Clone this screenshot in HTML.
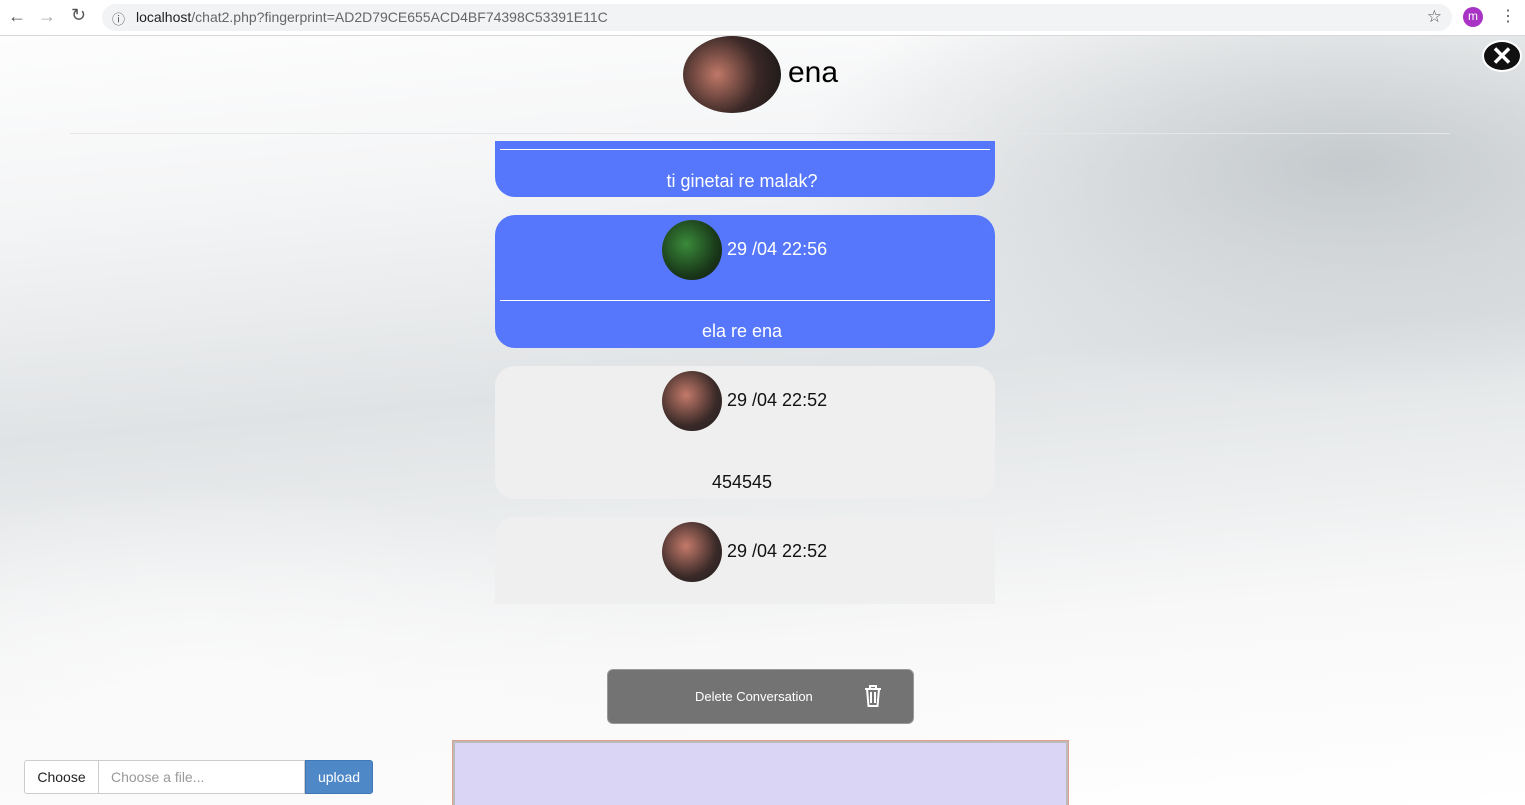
<!DOCTYPE html>
<html><head><style>
*{box-sizing:border-box;margin:0;padding:0}
html,body{width:1525px;height:805px;overflow:hidden}
body{font-family:"Liberation Sans",sans-serif;position:relative;background:#fff}
.bar{position:absolute;left:0;top:0;width:1525px;height:36px;background:#fff;border-bottom:1px solid #d8d8d8}
.url{position:absolute;left:102px;top:4px;width:1350px;height:27px;background:#f1f3f4;border-radius:14px}
.bg{position:absolute;left:0;top:36px;width:1525px;height:769px;background:linear-gradient(175deg,#fdfdfd 0%,#f4f5f6 20%,#e0e3e5 45%,#eceeef 62%,#f8f8f8 75%,#fff 100%)}
.bg2{position:absolute;left:0;top:36px;width:1525px;height:769px;background:radial-gradient(ellipse 550px 230px at 1350px 130px,#c5cacd,transparent),radial-gradient(ellipse 500px 200px at 200px 650px,#fafafa,transparent)}
.msg{position:absolute;left:495px;width:500px;border-radius:20px;text-align:center;font-size:18px;padding-right:6px}
.blue{background:#5677fb;color:#fff}
.grey{background:#efefef;color:#111}
.av{position:absolute;left:167px;width:60px;height:60px;border-radius:50%;background:radial-gradient(circle at 40% 40%,#c47a6a,#3a2a28 60%,#1b1b1b)}
.t{position:absolute;left:232px}
.line{position:absolute;left:5px;right:5px;height:1px;background:#fff}
</style></head><body>
<div class="bar">
<span style="position:absolute;left:8px;top:6px;font-size:18px;color:#555">←</span>
<span style="position:absolute;left:38px;top:6px;font-size:18px;color:#aaa">→</span>
<span style="position:absolute;left:71px;top:5px;font-size:18px;color:#555">↻</span>
<div class="url"><span style="position:absolute;left:10px;top:5px;font-size:13px;color:#555">ⓘ</span><span style="position:absolute;left:34px;top:5px;font-size:14px;color:#222">localhost<span style="color:#666">/chat2.php?fingerprint=AD2D79CE655ACD4BF74398C53391E11C</span></span>
<span style="position:absolute;right:10px;top:3px;font-size:17px;color:#555">☆</span></div>
<div style="position:absolute;left:1463px;top:7px;width:20px;height:20px;border-radius:50%;background:#a833c4;color:#fff;font-size:12px;text-align:center;line-height:19px">m</div>
<span style="position:absolute;left:1500px;top:6px;font-size:16px;color:#555">⋮</span>
</div>
<div class="bg"></div><div class="bg2"></div>
<div style="position:absolute;left:683px;top:36px;width:98px;height:77px;border-radius:50%;background:radial-gradient(circle at 35% 50%,#c07868,#3a2826 55%,#151515)"></div>
<div style="position:absolute;left:788px;top:56px;font-size:30px;color:#000">ena</div>
<div style="position:absolute;left:1482px;top:40px;width:40px;height:32px;border-radius:50%;background:#111;border:2px solid #fff;color:#fff;text-align:center;font-size:26px;line-height:28px;font-weight:bold">✕</div>
<div style="position:absolute;left:70px;top:133px;width:1380px;height:1px;background:#e4e6e8"></div>
<div class="msg blue" style="top:141px;height:56px;border-radius:0 0 20px 20px"><div class="line" style="top:8px"></div><div style="position:absolute;top:30px;width:100%;left:-3px">ti ginetai re malak?</div></div>
<div class="msg blue" style="top:215px;height:133px"><div class="av" style="top:5px;background:radial-gradient(circle at 40% 40%,#3a8a3a,#1a3a1a 60%,#111)"></div><div class="t" style="top:24px">29 /04 22:56</div><div class="line" style="top:85px"></div><div style="position:absolute;top:106px;width:100%;left:-3px">ela re ena</div></div>
<div class="msg grey" style="top:366px;height:133px"><div class="av" style="top:5px"></div><div class="t" style="top:24px">29 /04 22:52</div><div style="position:absolute;top:106px;width:100%;left:-3px">454545</div></div>
<div class="msg grey" style="top:517px;height:87px;border-radius:20px 20px 0 0"><div class="av" style="top:5px"></div><div class="t" style="top:24px">29 /04 22:52</div></div>
<div style="position:absolute;left:607px;top:669px;width:307px;height:55px;background:#737373;border:1px solid #999;border-radius:6px;color:#fff;font-size:13px">
<span style="position:absolute;left:87px;top:19px">Delete Conversation</span>
<svg style="position:absolute;left:256px;top:15px" width="18" height="22" viewBox="0 0 18 22" fill="none" stroke="#fff" stroke-width="2"><path d="M1 4h16M6 4V1h6v3M3 4l1.5 17h9L15 4M7 7v11M11 7v11"/></svg></div>
<div style="position:absolute;left:453px;top:741px;width:615px;height:64px;background:#dad4f5;border:2px solid #bbb;border-bottom:none;outline:1px solid #e0a090"></div>
<div style="position:absolute;left:24px;top:760px;width:75px;height:34px;border:1px solid #ccc;border-radius:3px 0 0 3px;background:#fff;font-size:14px;text-align:center;line-height:32px;color:#222">Choose</div>
<div style="position:absolute;left:98px;top:760px;width:207px;height:34px;border:1px solid #ccc;background:#fff;font-size:14px;line-height:32px;padding-left:12px;color:#999">Choose a file...</div>
<div style="position:absolute;left:305px;top:760px;width:68px;height:34px;background:#4e88c7;border:1px solid #3f78b5;border-radius:0 3px 3px 0;color:#fff;font-size:14px;text-align:center;line-height:32px">upload</div>
</body></html>
